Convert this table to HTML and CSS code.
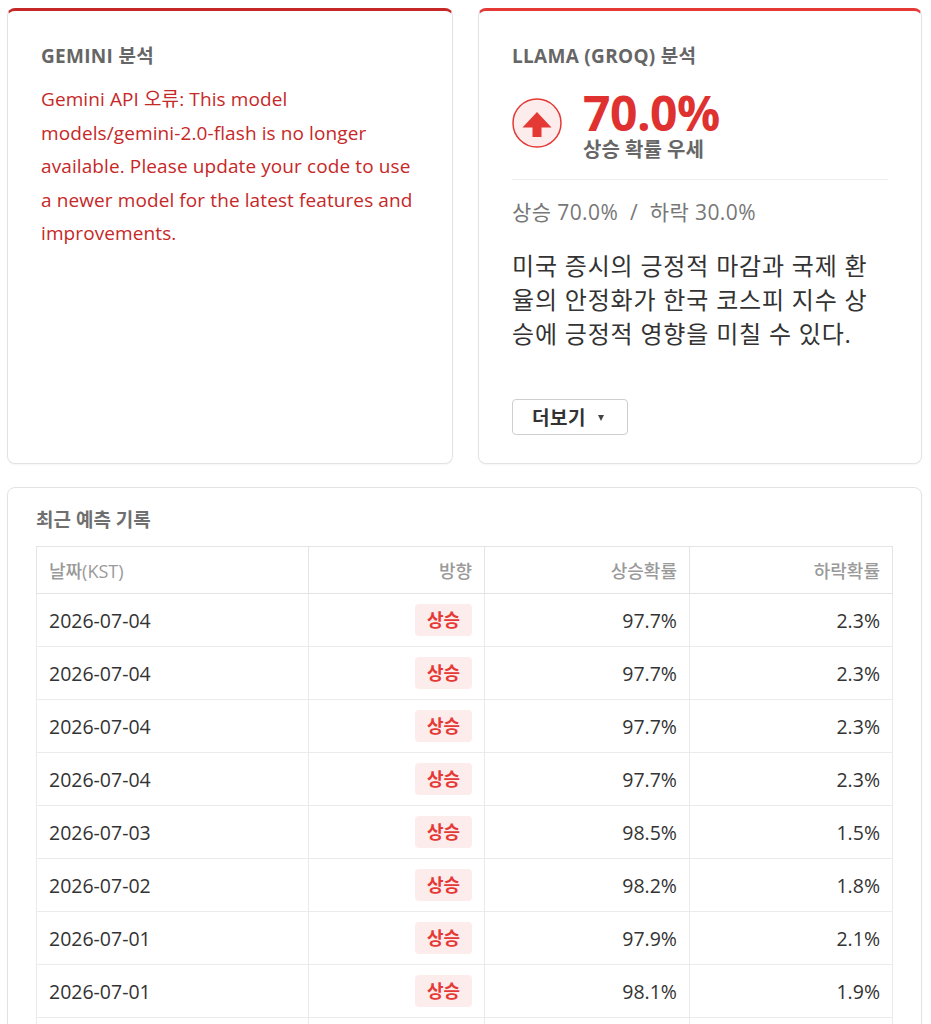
FILE: index.html
```html
<!DOCTYPE html>
<html lang="ko">
<head>
<meta charset="utf-8">
<title>분석</title>
<link rel="stylesheet" href="styles.css">
</head>
<body>
<div class="page">
  <div class="cards">
    <section class="card card-gemini">
      <h3 class="card-title">GEMINI 분석</h3>
      <p class="error-text">Gemini API 오류: This model models/gemini-2.0-flash is no longer available. Please update your code to use a newer model for the latest features and improvements.</p>
    </section>
    <section class="card card-llama">
      <h3 class="card-title">LLAMA (GROQ) 분석</h3>
      <div class="verdict">
        <svg class="verdict-icon" width="50" height="50" viewBox="0 0 50 50">
          <circle cx="25" cy="25" r="24" fill="#fdecec" stroke="#e53935" stroke-width="1.5"/>
          <path d="M25 14 L39.5 29.5 L29.5 29.5 L29.5 39 L20.5 39 L20.5 29.5 L10.5 29.5 Z" fill="#e53935"/>
        </svg>
        <div class="verdict-text">
          <div class="verdict-value">70.0%</div>
          <div class="verdict-label">상승 확률 우세</div>
        </div>
      </div>
      <div class="ratio">상승 70.0%&nbsp; / &nbsp;하락 30.0%</div>
      <p class="summary">미국 증시의 긍정적 마감과 국제 환율의 안정화가 한국 코스피 지수 상승에 긍정적 영향을 미칠 수 있다.</p>
      <button class="more-btn" type="button">더보기 <span class="caret"></span></button>
    </section>
  </div>
  <section class="card history">
    <h3 class="history-title">최근 예측 기록</h3>
    <table class="history-table">
      <thead>
        <tr><th class="col-date">날짜(KST)</th><th class="col-dir">방향</th><th class="col-up">상승확률</th><th class="col-down">하락확률</th></tr>
      </thead>
      <tbody>
        <tr><td>2026-07-04</td><td class="num"><span class="badge">상승</span></td><td class="num">97.7%</td><td class="num">2.3%</td></tr>
        <tr><td>2026-07-04</td><td class="num"><span class="badge">상승</span></td><td class="num">97.7%</td><td class="num">2.3%</td></tr>
        <tr><td>2026-07-04</td><td class="num"><span class="badge">상승</span></td><td class="num">97.7%</td><td class="num">2.3%</td></tr>
        <tr><td>2026-07-04</td><td class="num"><span class="badge">상승</span></td><td class="num">97.7%</td><td class="num">2.3%</td></tr>
        <tr><td>2026-07-03</td><td class="num"><span class="badge">상승</span></td><td class="num">98.5%</td><td class="num">1.5%</td></tr>
        <tr><td>2026-07-02</td><td class="num"><span class="badge">상승</span></td><td class="num">98.2%</td><td class="num">1.8%</td></tr>
        <tr><td>2026-07-01</td><td class="num"><span class="badge">상승</span></td><td class="num">97.9%</td><td class="num">2.1%</td></tr>
        <tr><td>2026-07-01</td><td class="num"><span class="badge">상승</span></td><td class="num">98.1%</td><td class="num">1.9%</td></tr>
        <tr class="row-more"><td></td><td></td><td></td><td></td></tr>
      </tbody>
    </table>
  </section>
</div>
</body>
</html>
```

FILE: styles.css
```css
* { box-sizing: border-box; }
html, body { margin: 0; padding: 0; background: #ffffff; }
body {
  font-family: "Open Sans", "Noto Sans CJK KR", sans-serif;
  color: #333;
}
.page {
  padding: 8px 9px 0 7px;
  display: flex;
  flex-direction: column;
  gap: 23px;
}
.cards {
  display: grid;
  grid-template-columns: 446fr 444fr;
  gap: 25px;
}
.card {
  background: #fff;
  border: 1px solid #e3e3e3;
  border-radius: 8px;
  box-shadow: 0 1px 2px rgba(0,0,0,0.04);
}
.card-gemini, .card-llama {
  padding: 33px 33px 28px 33px;
}
.card-gemini { border-top: 3px solid #c62828; }
.card-llama { border-top: 3px solid #e53935; }
.card-title {
  margin: 0;
  font-size: 19px;
  line-height: 24px;
  letter-spacing: 0.3px;
  font-weight: 700;
  color: #666;
}
.error-text {
  margin: 15px 0 0;
  font-size: 19px;
  line-height: 33.5px;
  letter-spacing: 0.1px;
  color: #c62828;
}
.verdict {
  display: flex;
  align-items: center;
  gap: 21px;
  margin-top: 20px;
}
.verdict-icon { display: block; flex: none; margin-top: -4px; }
.verdict-text { display: flex; flex-direction: column; }
.verdict-value {
  font-size: 48px;
  line-height: 50px;
  font-weight: 700;
  color: #e03131;
  letter-spacing: -0.5px;
}
.verdict-label {
  font-size: 20px;
  line-height: 24px;
  font-weight: 700;
  color: #666;
}
.ratio {
  margin-top: 17px;
  border-top: 1px solid #eeeeee;
  padding-top: 18px;
  font-size: 21px;
  line-height: 28px;
  letter-spacing: 0.4px;
  color: #777;
}
.summary {
  margin: 23px 0 0;
  font-size: 24px;
  line-height: 34px;
  letter-spacing: 0.8px;
  color: #333;
}
.more-btn {
  margin-top: 48px;
  height: 36px;
  padding: 0 23px 0 19px;
  background: #fff;
  border: 1px solid #cfcfcf;
  border-radius: 4px;
  font-family: "Open Sans", "Noto Sans CJK KR", sans-serif;
  font-size: 19px;
  letter-spacing: 0.5px;
  font-weight: 700;
  color: #333;
  display: inline-flex;
  align-items: center;
  gap: 12px;
}
.caret {
  width: 0;
  height: 0;
  border-left: 3.5px solid transparent;
  border-right: 3.5px solid transparent;
  border-top: 6px solid #444;
  margin-top: 2px;
}
.history {
  padding: 20px 28px 0 28px;
}
.history-title {
  margin: 0 0 14px;
  font-size: 19px;
  line-height: 24px;
  font-weight: 700;
  color: #6f6f6f;
}
.history-table {
  width: 100%;
  border-collapse: collapse;
  border: 1px solid #dedede;
  table-layout: fixed;
}
.col-date { width: 272px; }
.col-dir { width: 176px; }
.col-up { width: 205px; }
.history-table th {
  height: 47px;
  padding: 0 12px;
  font-size: 18px;
  font-weight: 500;
  color: #9a9a9a;
  text-align: right;
  border: 1px solid #e4e4e4;
}
.history-table th.col-date { text-align: left; }
.history-table td {
  height: 53px;
  padding: 0 12px;
  font-size: 19.5px;
  color: #333;
  border: 1px solid #ebebeb;
  text-align: left;
}
.history-table td.num { text-align: right; }
.badge {
  display: inline-block;
  padding: 0 12px;
  height: 32px;
  line-height: 32px;
  border-radius: 4px;
  background: #fdecec;
  color: #e53935;
  font-weight: 700;
  font-size: 18px;
  vertical-align: middle;
}
```
